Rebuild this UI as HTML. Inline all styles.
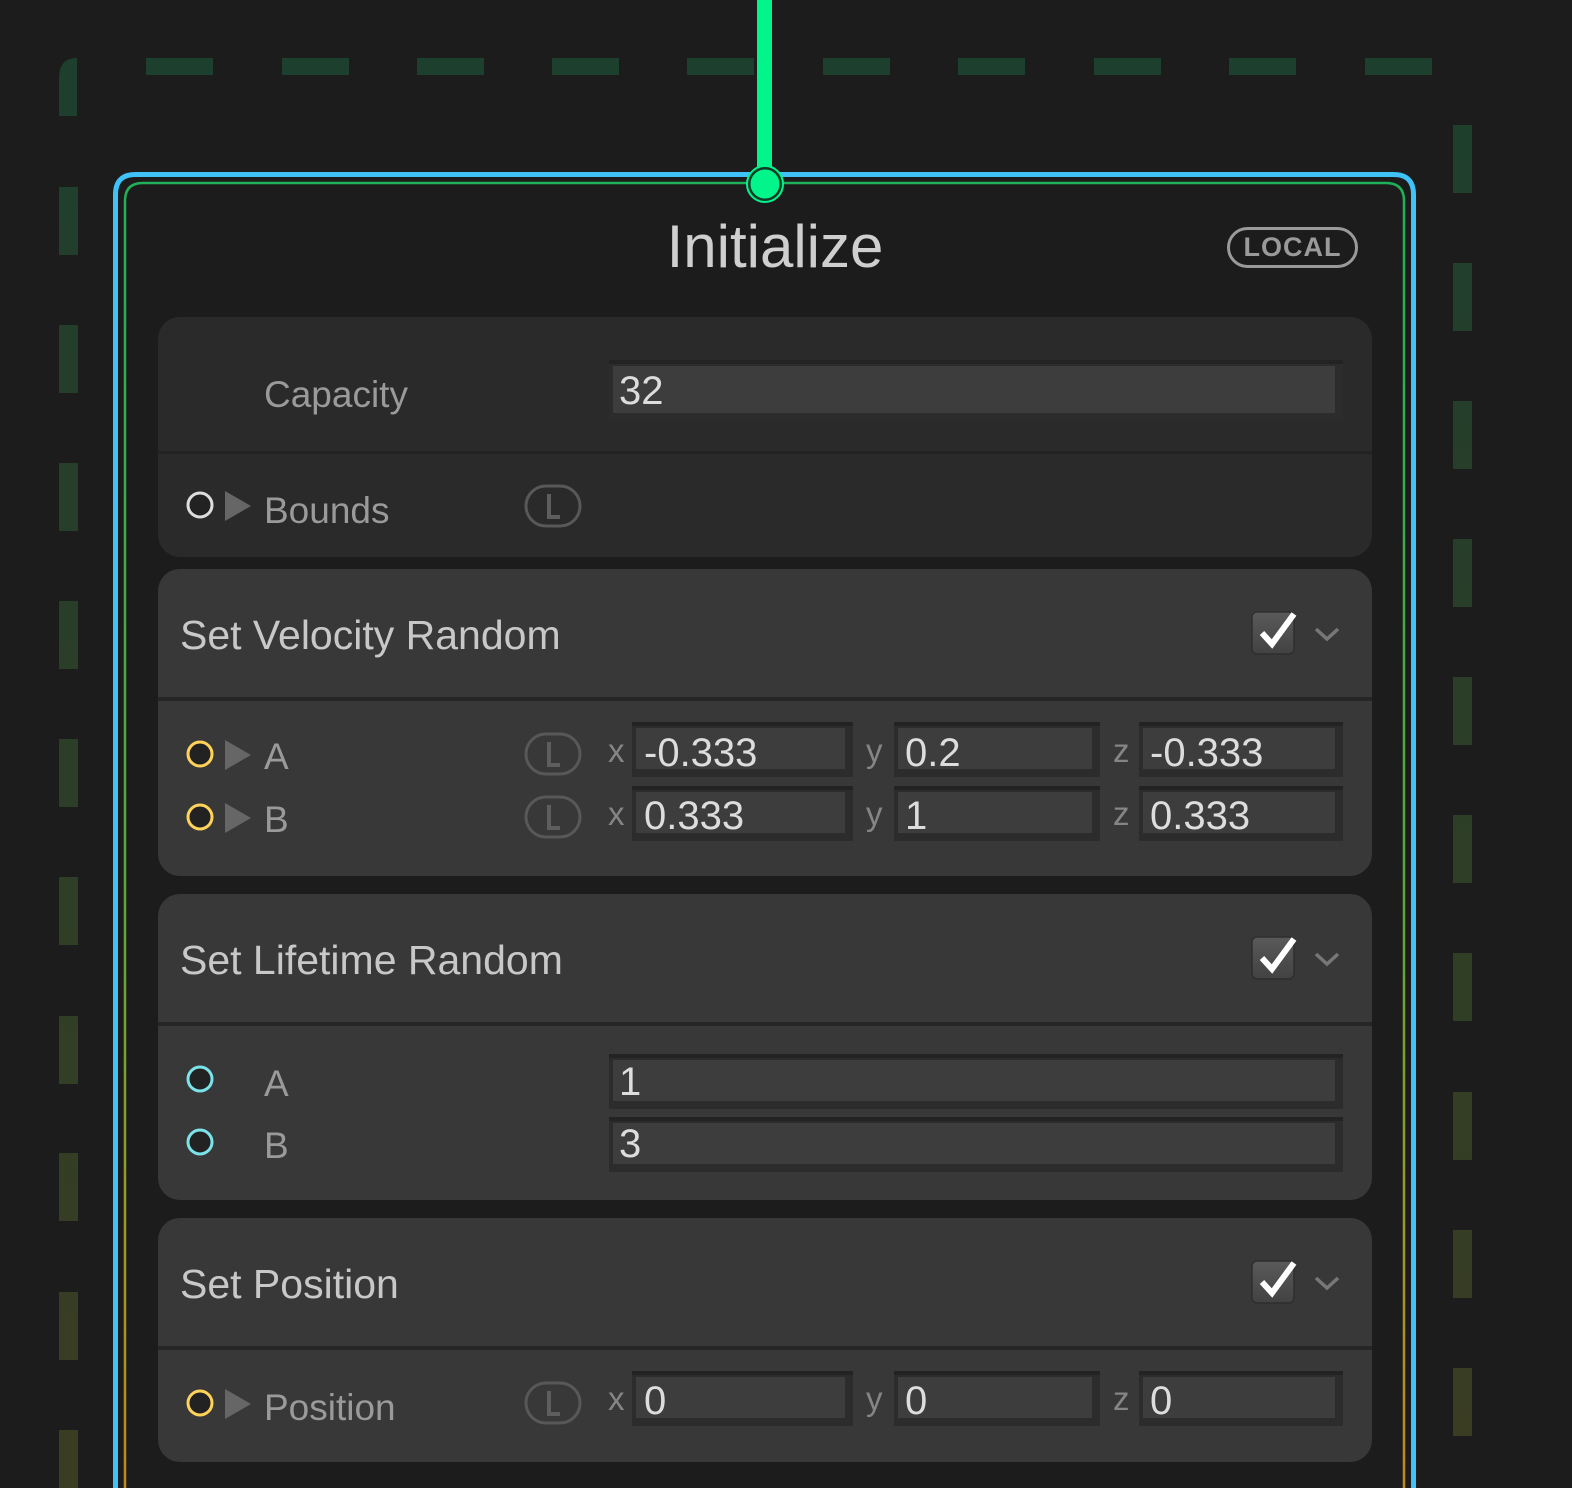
<!DOCTYPE html>
<html style="overflow:hidden;width:1572px;height:1488px"><head><meta charset="utf-8"><style>
*{margin:0;padding:0;box-sizing:border-box}
body{width:1572px;height:1488px;background:#1c1c1c;position:relative;overflow:hidden;font-family:"Liberation Sans",sans-serif}
.a{position:absolute;line-height:1;white-space:nowrap}
.sec{position:absolute;left:158px;width:1214px;border-radius:22px;overflow:hidden}
.in{position:absolute;background:#2c2c2c;border-top:4px solid #232323}
.in i{position:absolute;left:4px;right:8px;top:2px;bottom:8px;background:#3d3d3d}
.v{color:#ddd;font-size:40px}
.lab{color:#9a9a9a;font-size:37px}
.xyz{color:#858585;font-size:33px}
.hd{color:#c8c8c8;font-size:41px}
</style></head><body>
<svg class="a" style="left:0;top:0" width="1572" height="1488">
<defs>
<linearGradient id="dg" x1="0" y1="0" x2="0" y2="1488" gradientUnits="userSpaceOnUse"><stop offset="0" stop-color="#1c3f2e"/><stop offset="1" stop-color="#3b3d22"/></linearGradient>
<linearGradient id="ig" x1="0" y1="180" x2="0" y2="1488" gradientUnits="userSpaceOnUse"><stop offset="0" stop-color="#1fb05a"/><stop offset="0.55" stop-color="#5aa838"/><stop offset="0.8" stop-color="#9a9a28"/><stop offset="1" stop-color="#c08a1e"/></linearGradient>
</defs>
<g fill="url(#dg)">
<path d="M59 116 V78 Q59 58 77 58 V116 Z"/>
<rect x="59" y="187" width="19" height="68"/><rect x="59" y="325" width="19" height="68"/><rect x="59" y="463" width="19" height="68"/><rect x="59" y="601" width="19" height="68"/><rect x="59" y="739" width="19" height="68"/><rect x="59" y="877" width="19" height="68"/><rect x="59" y="1016" width="19" height="68"/><rect x="59" y="1153" width="19" height="68"/><rect x="59" y="1292" width="19" height="68"/><rect x="59" y="1430" width="19" height="58"/>
<rect x="1453" y="125" width="19" height="68"/><rect x="1453" y="263" width="19" height="68"/><rect x="1453" y="401" width="19" height="68"/><rect x="1453" y="539" width="19" height="68"/><rect x="1453" y="677" width="19" height="68"/><rect x="1453" y="815" width="19" height="68"/><rect x="1453" y="953" width="19" height="68"/><rect x="1453" y="1092" width="19" height="68"/><rect x="1453" y="1230" width="19" height="68"/><rect x="1453" y="1368" width="19" height="68"/>
</g>
<g fill="#1c3f2e">
<rect x="146" y="58" width="67" height="17"/><rect x="282" y="58" width="67" height="17"/><rect x="417" y="58" width="67" height="17"/><rect x="552" y="58" width="67" height="17"/><rect x="687" y="58" width="67" height="17"/><rect x="823" y="58" width="67" height="17"/><rect x="958" y="58" width="67" height="17"/><rect x="1094" y="58" width="67" height="17"/><rect x="1229" y="58" width="67" height="17"/><rect x="1365" y="58" width="67" height="17"/>
</g>
<path d="M115.5 1490 V194.5 Q115.5 174.5 135.5 174.5 H1393.5 Q1413.5 174.5 1413.5 194.5 V1490" fill="none" stroke="#3ec2f8" stroke-width="5"/>
<path d="M125 1490 V201 Q125 183 143 183 H1386 Q1404 183 1404 201 V1490" fill="none" stroke="url(#ig)" stroke-width="2.5"/>
<rect x="757" y="0" width="15" height="172" fill="#02f58a"/>
<circle cx="765" cy="184" r="16" fill="#02f58a" stroke="#0f3a26" stroke-width="3"/>
<circle cx="765" cy="184" r="18" fill="none" stroke="#02f58a" stroke-width="2"/>
</svg>

<div class="a" style="left:0;width:1550px;text-align:center;top:217px;font-size:60px;color:#cfcfcf">Initialize</div>
<div class="a" style="left:1227px;top:227px;width:131px;height:41px;border:3px solid #9a9a9a;border-radius:21px;color:#9a9a9a;font-weight:bold;font-size:27px;text-align:center;line-height:35px;letter-spacing:1px">LOCAL</div>

<div class="sec" style="top:317px;height:240px;background:#2a2a2a">
<div style="position:absolute;left:0;right:0;top:134px;height:3px;background:#232323"></div>
</div>
<div class="a lab" style="left:264px;top:376px">Capacity</div>
<div class="in" style="left:609px;top:360px;width:734px;height:61px"><i></i></div>
<div class="a v" style="left:619px;top:371px">32</div>
<div class="a lab" style="left:264px;top:492px">Bounds</div>

<div class="sec" style="top:569px;height:307px;background:#383838">
<div style="position:absolute;left:0;right:0;top:128px;height:4px;background:#262626"></div>
</div>
<div class="a hd" style="left:180px;top:615px">Set Velocity Random</div>
<div class="a lab" style="left:264px;top:738px">A</div>
<div class="a lab" style="left:264px;top:801px">B</div>

<div class="sec" style="top:894px;height:306px;background:#383838">
<div style="position:absolute;left:0;right:0;top:128px;height:4px;background:#262626"></div>
</div>
<div class="a hd" style="left:180px;top:940px">Set Lifetime Random</div>
<div class="a lab" style="left:264px;top:1065px">A</div>
<div class="a lab" style="left:264px;top:1127px">B</div>
<div class="in" style="left:609px;top:1054px;width:734px;height:55px"><i></i></div>
<div class="in" style="left:609px;top:1117px;width:734px;height:55px"><i></i></div>
<div class="a v" style="left:619px;top:1062px">1</div>
<div class="a v" style="left:619px;top:1124px">3</div>

<div class="sec" style="top:1218px;height:244px;background:#383838">
<div style="position:absolute;left:0;right:0;top:128px;height:4px;background:#262626"></div>
</div>
<div class="a hd" style="left:180px;top:1264px">Set Position</div>
<div class="a lab" style="left:264px;top:1389px">Position</div>

<div class="in" style="left:632px;top:722px;width:221px;height:55px"><i></i></div>
<div class="in" style="left:894px;top:722px;width:206px;height:55px"><i></i></div>
<div class="in" style="left:1139px;top:722px;width:204px;height:55px"><i></i></div>
<div class="in" style="left:632px;top:786px;width:221px;height:55px"><i></i></div>
<div class="in" style="left:894px;top:786px;width:206px;height:55px"><i></i></div>
<div class="in" style="left:1139px;top:786px;width:204px;height:55px"><i></i></div>
<div class="in" style="left:632px;top:1371px;width:221px;height:55px"><i></i></div>
<div class="in" style="left:894px;top:1371px;width:206px;height:55px"><i></i></div>
<div class="in" style="left:1139px;top:1371px;width:204px;height:55px"><i></i></div>

<div class="a xyz" style="left:608px;top:734px">x</div><div class="a xyz" style="left:866px;top:734px">y</div><div class="a xyz" style="left:1113px;top:734px">z</div>
<div class="a xyz" style="left:608px;top:797px">x</div><div class="a xyz" style="left:866px;top:797px">y</div><div class="a xyz" style="left:1113px;top:797px">z</div>
<div class="a xyz" style="left:608px;top:1382px">x</div><div class="a xyz" style="left:866px;top:1382px">y</div><div class="a xyz" style="left:1113px;top:1382px">z</div>

<div class="a v" style="left:644px;top:733px">-0.333</div><div class="a v" style="left:905px;top:733px">0.2</div><div class="a v" style="left:1150px;top:733px">-0.333</div>
<div class="a v" style="left:644px;top:796px">0.333</div><div class="a v" style="left:905px;top:796px">1</div><div class="a v" style="left:1150px;top:796px">0.333</div>
<div class="a v" style="left:644px;top:1381px">0</div><div class="a v" style="left:905px;top:1381px">0</div><div class="a v" style="left:1150px;top:1381px">0</div>

<svg class="a" style="left:0;top:0" width="1572" height="1488">
<g stroke-width="3" fill="#222">
<circle cx="200" cy="505" r="12" stroke="#ddd"/>
<circle cx="200" cy="754" r="12" stroke="#ffd35a"/>
<circle cx="200" cy="817" r="12" stroke="#ffd35a"/>
<circle cx="200" cy="1079" r="12" stroke="#7be3ea"/>
<circle cx="200" cy="1142" r="12" stroke="#7be3ea"/>
<circle cx="200" cy="1403" r="12" stroke="#ffd35a"/>
</g>
<g fill="#666">
<path d="M225 491 L251 506 L225 521Z"/>
<path d="M225 740 L251 755 L225 770Z"/>
<path d="M225 803 L251 818 L225 833Z"/>
<path d="M225 1389 L251 1404 L225 1419Z"/>
</g>
<g fill="none" stroke="#585858" stroke-width="3">
<rect x="526" y="486" width="54" height="40" rx="20"/>
<rect x="526" y="734" width="54" height="40" rx="20"/>
<rect x="526" y="797" width="54" height="40" rx="20"/>
<rect x="526" y="1383" width="54" height="40" rx="20"/>
</g>
<g fill="none" stroke="#5e5e5e" stroke-width="4">
<path d="M549 494 V517 H560"/>
<path d="M549 742 V765 H560"/>
<path d="M549 805 V828 H560"/>
<path d="M549 1391 V1414 H560"/>
</g>
<defs><linearGradient id="cb" x1="0" y1="0" x2="0" y2="1"><stop offset="0" stop-color="#5a5a5a"/><stop offset="1" stop-color="#424242"/></linearGradient></defs>
<g>
<rect x="1252" y="612" width="42" height="42" rx="5" fill="url(#cb)" stroke="#2e2e2e" stroke-width="1.5"/>
<path d="M1262 633 L1272 644 L1294 614" fill="none" stroke="#fff" stroke-width="6"/>
<path d="M1316 629 L1327 639 L1338 629" fill="none" stroke="#777" stroke-width="3.5"/>
<rect x="1252" y="937" width="42" height="42" rx="5" fill="url(#cb)" stroke="#2e2e2e" stroke-width="1.5"/>
<path d="M1262 958 L1272 969 L1294 939" fill="none" stroke="#fff" stroke-width="6"/>
<path d="M1316 954 L1327 964 L1338 954" fill="none" stroke="#777" stroke-width="3.5"/>
<rect x="1252" y="1261" width="42" height="42" rx="5" fill="url(#cb)" stroke="#2e2e2e" stroke-width="1.5"/>
<path d="M1262 1282 L1272 1293 L1294 1263" fill="none" stroke="#fff" stroke-width="6"/>
<path d="M1316 1278 L1327 1288 L1338 1278" fill="none" stroke="#777" stroke-width="3.5"/>
</g>
</svg>
</body></html>
